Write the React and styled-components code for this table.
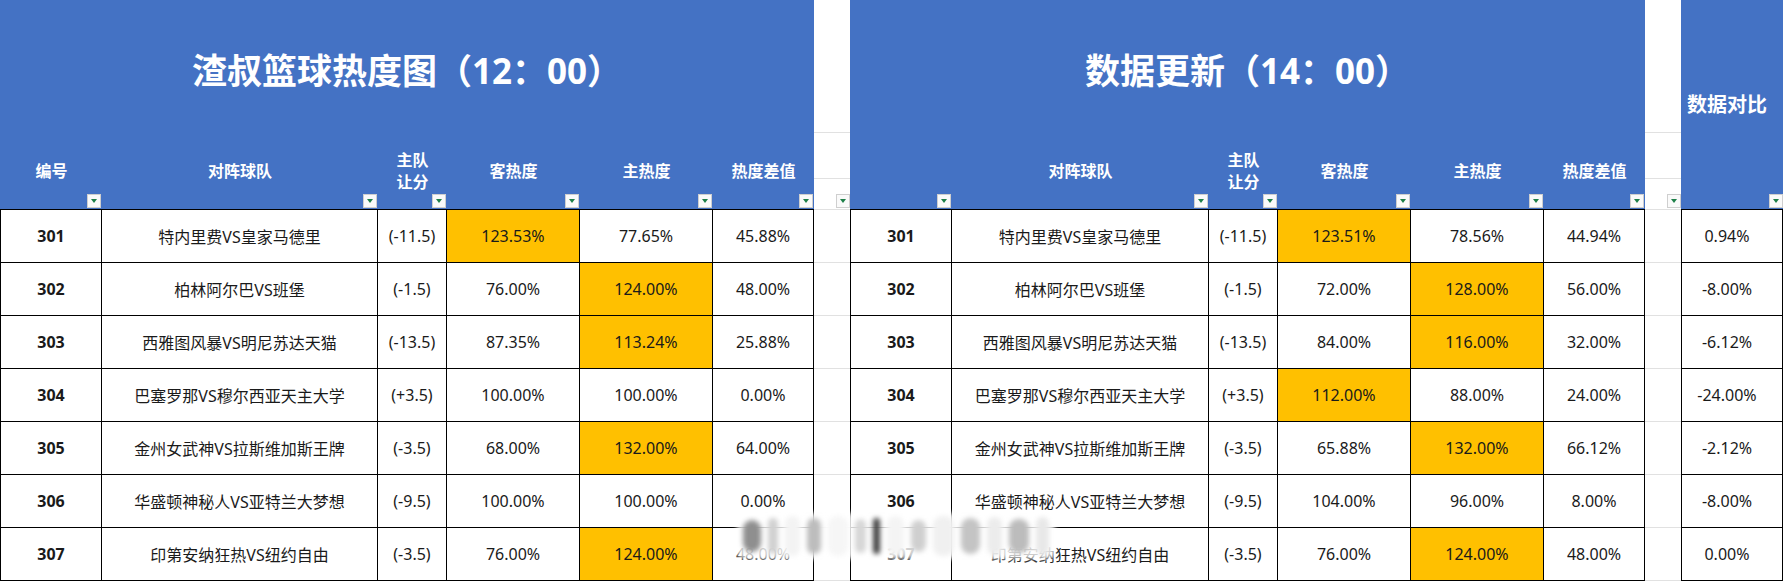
import React from "react";
import styled, { createGlobalStyle } from "styled-components";

const BLUE = "#4472c4";
const GOLD = "#ffc000";
const GRID = "#e1e1e1";

const GlobalStyle = createGlobalStyle`
  body {
    margin: 0;
    background: #fff;
    font-family: "Noto Sans", "Noto Sans CJK SC", sans-serif;
  }
`;

const Page = styled.div`
  position: relative;
  display: flex;
  align-items: flex-start;
  width: 1783px;
  height: 582px;
  overflow: hidden;
`;

const Sheet = styled.div`
  display: flex;
  flex-direction: column;
  flex-shrink: 0;
  width: ${p => p.$width}px;
`;

const TitleBar = styled.div`
  height: 133px;
  background: ${BLUE};
  color: #fff;
  font-size: 35px;
  font-weight: 700;
  display: flex;
  align-items: center;
  justify-content: center;
  padding-top: 3px;
  box-sizing: border-box;
`;

const HeadRow = styled.div`
  display: grid;
  grid-template-columns: ${p => p.$cols};
  height: 76px;
  padding-left: 1px;
  background: ${BLUE};
`;

const HeadCell = styled.div`
  position: relative;
  display: flex;
  align-items: center;
  justify-content: center;
  text-align: center;
  color: #fff;
  font-size: 16px;
  font-weight: 700;
  line-height: 22px;
`;

const BigHead = styled(HeadCell)`
  height: 209px;
  background: ${BLUE};
  font-size: 20px;
  padding-right: 10px;
  box-sizing: border-box;
`;

const Filter = styled.span`
  position: absolute;
  right: ${p => p.$right ?? 1}px;
  bottom: 1px;
  width: 14px;
  height: 14px;
  box-sizing: border-box;
  background: #fafafa;
  border: 1px solid #cfcfcf;
  display: flex;
  align-items: center;
  justify-content: center;

  &::after {
    content: "";
    border-left: 3.5px solid transparent;
    border-right: 3.5px solid transparent;
    border-top: 4px solid #1e8049;
  }
`;

const Body = styled.div`
  display: grid;
  grid-template-columns: ${p => p.$cols};
  grid-auto-rows: 53px;
  border-left: 1px solid #000;
  border-top: 1px solid #000;
`;

const Cell = styled.div`
  display: flex;
  align-items: center;
  justify-content: center;
  box-sizing: border-box;
  border-right: 1px solid #000;
  border-bottom: 1px solid #000;
  background: ${p => (p.$hot ? GOLD : "#fff")};
  color: #1a1a1a;
  font-size: 16px;
  font-weight: ${p => (p.$bold ? 700 : 400)};
  padding-right: ${p => p.$pad || 0}px;
  white-space: nowrap;
`;

const Gap = styled.div`
  display: flex;
  flex-direction: column;
  flex-shrink: 0;
  width: 36px;
`;

const GapCell = styled.div`
  position: relative;
  height: ${p => p.$h}px;
  box-sizing: border-box;
  border-bottom: 1px solid ${GRID};
`;

const Watermark = styled.div`
  position: absolute;
  left: 737px;
  top: 513px;
  width: 318px;
  height: 46px;
  display: flex;
  align-items: stretch;
  gap: 7px;
  padding: 3px 6px;
  box-sizing: border-box;
  background: rgba(255, 255, 255, 0.8);
  border-radius: 6px;
  filter: blur(2.5px);
`;

const Smear = styled.span`
  width: ${p => p.$w}px;
  margin: ${p => p.$m || 0}px 0;
  background: ${p => p.$c};
  border-radius: 9px;
`;

const cols1 = "101px 276px 69px 133px 133px 101px";
const cols2 = "101px 257px 69px 133px 133px 101px";

const rows1 = [
  ["301", "特内里费VS皇家马德里", "(-11.5)", "123.53%", "77.65%", "45.88%", 1],
  ["302", "柏林阿尔巴VS班堡", "(-1.5)", "76.00%", "124.00%", "48.00%", 2],
  ["303", "西雅图风暴VS明尼苏达天猫", "(-13.5)", "87.35%", "113.24%", "25.88%", 2],
  ["304", "巴塞罗那VS穆尔西亚天主大学", "(+3.5)", "100.00%", "100.00%", "0.00%", 0],
  ["305", "金州女武神VS拉斯维加斯王牌", "(-3.5)", "68.00%", "132.00%", "64.00%", 2],
  ["306", "华盛顿神秘人VS亚特兰大梦想", "(-9.5)", "100.00%", "100.00%", "0.00%", 0],
  ["307", "印第安纳狂热VS纽约自由", "(-3.5)", "76.00%", "124.00%", "48.00%", 2],
];

const rows2 = [
  ["301", "特内里费VS皇家马德里", "(-11.5)", "123.51%", "78.56%", "44.94%", 1],
  ["302", "柏林阿尔巴VS班堡", "(-1.5)", "72.00%", "128.00%", "56.00%", 2],
  ["303", "西雅图风暴VS明尼苏达天猫", "(-13.5)", "84.00%", "116.00%", "32.00%", 2],
  ["304", "巴塞罗那VS穆尔西亚天主大学", "(+3.5)", "112.00%", "88.00%", "24.00%", 1],
  ["305", "金州女武神VS拉斯维加斯王牌", "(-3.5)", "65.88%", "132.00%", "66.12%", 2],
  ["306", "华盛顿神秘人VS亚特兰大梦想", "(-9.5)", "104.00%", "96.00%", "8.00%", 0],
  ["307", "印第安纳狂热VS纽约自由", "(-3.5)", "76.00%", "124.00%", "48.00%", 2],
];

const diffs = ["0.94%", "-8.00%", "-6.12%", "-24.00%", "-2.12%", "-8.00%", "0.00%"];

const smears = [
  [22, "#8f8f8f", 4], [12, "#d0d0d0", 2], [18, "#f3f3f3", 0], [16, "#bdbdbd", 2],
  [24, "#f6f6f6", 0], [14, "#d6d6d6", 3], [8, "#404040", 2], [20, "#f4f4f4", 0],
  [18, "#cfcfcf", 4], [26, "#f0f0f0", 0], [22, "#c4c4c4", 2], [18, "#ececec", 1],
  [24, "#bcbcbc", 3], [16, "#e8e8e8", 1],
];

const HeatSheet = ({ title, width, cols, rows, showId }) => (
  <Sheet $width={width}>
    <TitleBar>{title}</TitleBar>
    <HeadRow $cols={cols}>
      <HeadCell>{showId && "编号"}<Filter /></HeadCell>
      <HeadCell>对阵球队<Filter /></HeadCell>
      <HeadCell>主队<br />让分<Filter /></HeadCell>
      <HeadCell>客热度<Filter /></HeadCell>
      <HeadCell>主热度<Filter /></HeadCell>
      <HeadCell>热度差值<Filter /></HeadCell>
    </HeadRow>
    <Body $cols={cols}>
      {rows.map(r => (
        <React.Fragment key={r[0]}>
          <Cell $bold>{r[0]}</Cell>
          <Cell>{r[1]}</Cell>
          <Cell>{r[2]}</Cell>
          <Cell $hot={r[6] === 1}>{r[3]}</Cell>
          <Cell $hot={r[6] === 2}>{r[4]}</Cell>
          <Cell>{r[5]}</Cell>
        </React.Fragment>
      ))}
    </Body>
  </Sheet>
);

const Spacer = () => (
  <Gap>
    <GapCell $h={133} />
    <GapCell $h={46} />
    <GapCell $h={31}><Filter $right={0} /></GapCell>
    {diffs.map((d, i) => <GapCell key={i} $h={53} />)}
  </Gap>
);

export default function App() {
  return (
    <Page>
      <GlobalStyle />
      <HeatSheet title="渣叔篮球热度图（12：00）" width={814} cols={cols1} rows={rows1} showId />
      <Spacer />
      <HeatSheet title="数据更新（14：00）" width={795} cols={cols2} rows={rows2} />
      <Spacer />
      <Sheet $width={102}>
        <BigHead>数据对比<Filter $right={0} /></BigHead>
        <Body $cols="101px">
          {diffs.map((d, i) => <Cell key={i} $pad={10}>{d}</Cell>)}
        </Body>
      </Sheet>
      <Watermark>
        {smears.map(([w, c, m], i) => <Smear key={i} $w={w} $c={c} $m={m} />)}
      </Watermark>
    </Page>
  );
}
